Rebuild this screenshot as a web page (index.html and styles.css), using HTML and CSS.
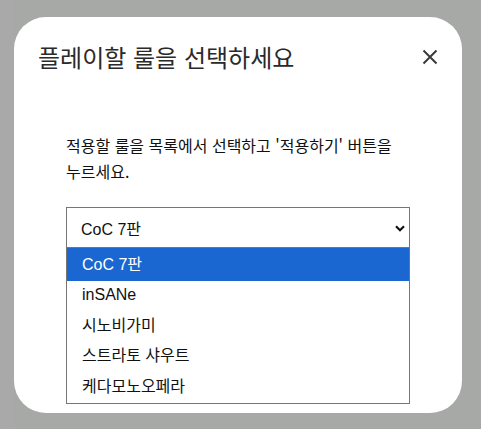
FILE: index.html
```html
<!DOCTYPE html>
<html lang="ko">
<head>
<meta charset="utf-8">
<link rel="stylesheet" href="styles.css">
</head>
<body>
<div class="backdrop">
  <div class="modal">
    <div class="modal-header">
      <h2 class="modal-title">플레이할 룰을 선택하세요</h2>
      <button class="close" aria-label="닫기">
        <svg width="16" height="16" viewBox="0 0 16 16"><path d="M1.5 1.5L14.5 14.5M14.5 1.5L1.5 14.5" stroke="#3a3a3a" stroke-width="2" fill="none"/></svg>
      </button>
    </div>
    <div class="modal-body">
      <p class="desc">적용할 룰을 목록에서 선택하고 '적용하기' 버튼을 누르세요.</p>
      <div class="select-wrap">
        <div class="select">
          <span>CoC 7판</span>
          <svg class="chev" width="10" height="7" viewBox="0 0 10 7"><path d="M1 1.2L5 5.2L9 1.2" stroke="#111" stroke-width="2.2" fill="none"/></svg>
        </div>
        <ul class="options">
          <li class="opt sel">CoC 7판</li>
          <li class="opt">inSANe</li>
          <li class="opt">시노비가미</li>
          <li class="opt">스트라토 샤우트</li>
          <li class="opt">케다모노오페라</li>
        </ul>
      </div>
    </div>
  </div>
</div>
</body>
</html>
```
FILE: styles.css
```css
html, body {
  margin: 0;
  padding: 0;
  height: 100%;
  background: #a9a9a9;
  font-family: "Liberation Sans", "Noto Sans CJK KR", sans-serif;
}
.backdrop {
  margin-left: 14px;
  height: 429px;
  background: #a7a9a6;
  padding-top: 17px;
  box-sizing: border-box;
}
.modal {
  width: 448px;
  height: 396px;
  background: #fff;
  border-radius: 32px;
  box-sizing: border-box;
}
.modal-header {
  display: flex;
  align-items: center;
  justify-content: space-between;
  padding: 22px 24px 0 24px;
}
.modal-title {
  margin: 0;
  font-family: "Noto Sans CJK KR", sans-serif;
  font-weight: 400;
  font-size: 24px;
  line-height: 36px;
  color: #2a2a2a;
}
.close {
  border: 0;
  background: none;
  padding: 0;
  width: 16px;
  height: 16px;
  display: flex;
}
.modal-body {
  padding: 0 52px;
}
.desc {
  margin: 57px 0 0;
  font-family: "Noto Sans CJK KR", sans-serif;
  font-size: 16px;
  line-height: 26px;
  color: #111;
  word-break: keep-all;
}
.select-wrap {
  margin-top: 23px;
  position: relative;
}
.select {
  height: 41px;
  border: 1px solid #767676;
  box-sizing: border-box;
  display: flex;
  align-items: center;
  justify-content: space-between;
  padding: 0 4px 0 14px;
  font-size: 16px;
  color: #111;
}
.chev {
  margin-top: 1px;
}
.options {
  position: absolute;
  left: 0;
  right: 0;
  top: 41px;
  margin: 0;
  padding: 0;
  list-style: none;
  border: 1px solid #767676;
  border-top: 0;
  background: #fff;
}
.opt {
  height: 30.5px;
  line-height: 28px;
  padding-left: 15px;
  font-size: 16px;
  color: #111;
}
.opt.sel {
  height: 33px;
  line-height: 33px;
  background: #1a67d2;
  color: #fff;
}
```
